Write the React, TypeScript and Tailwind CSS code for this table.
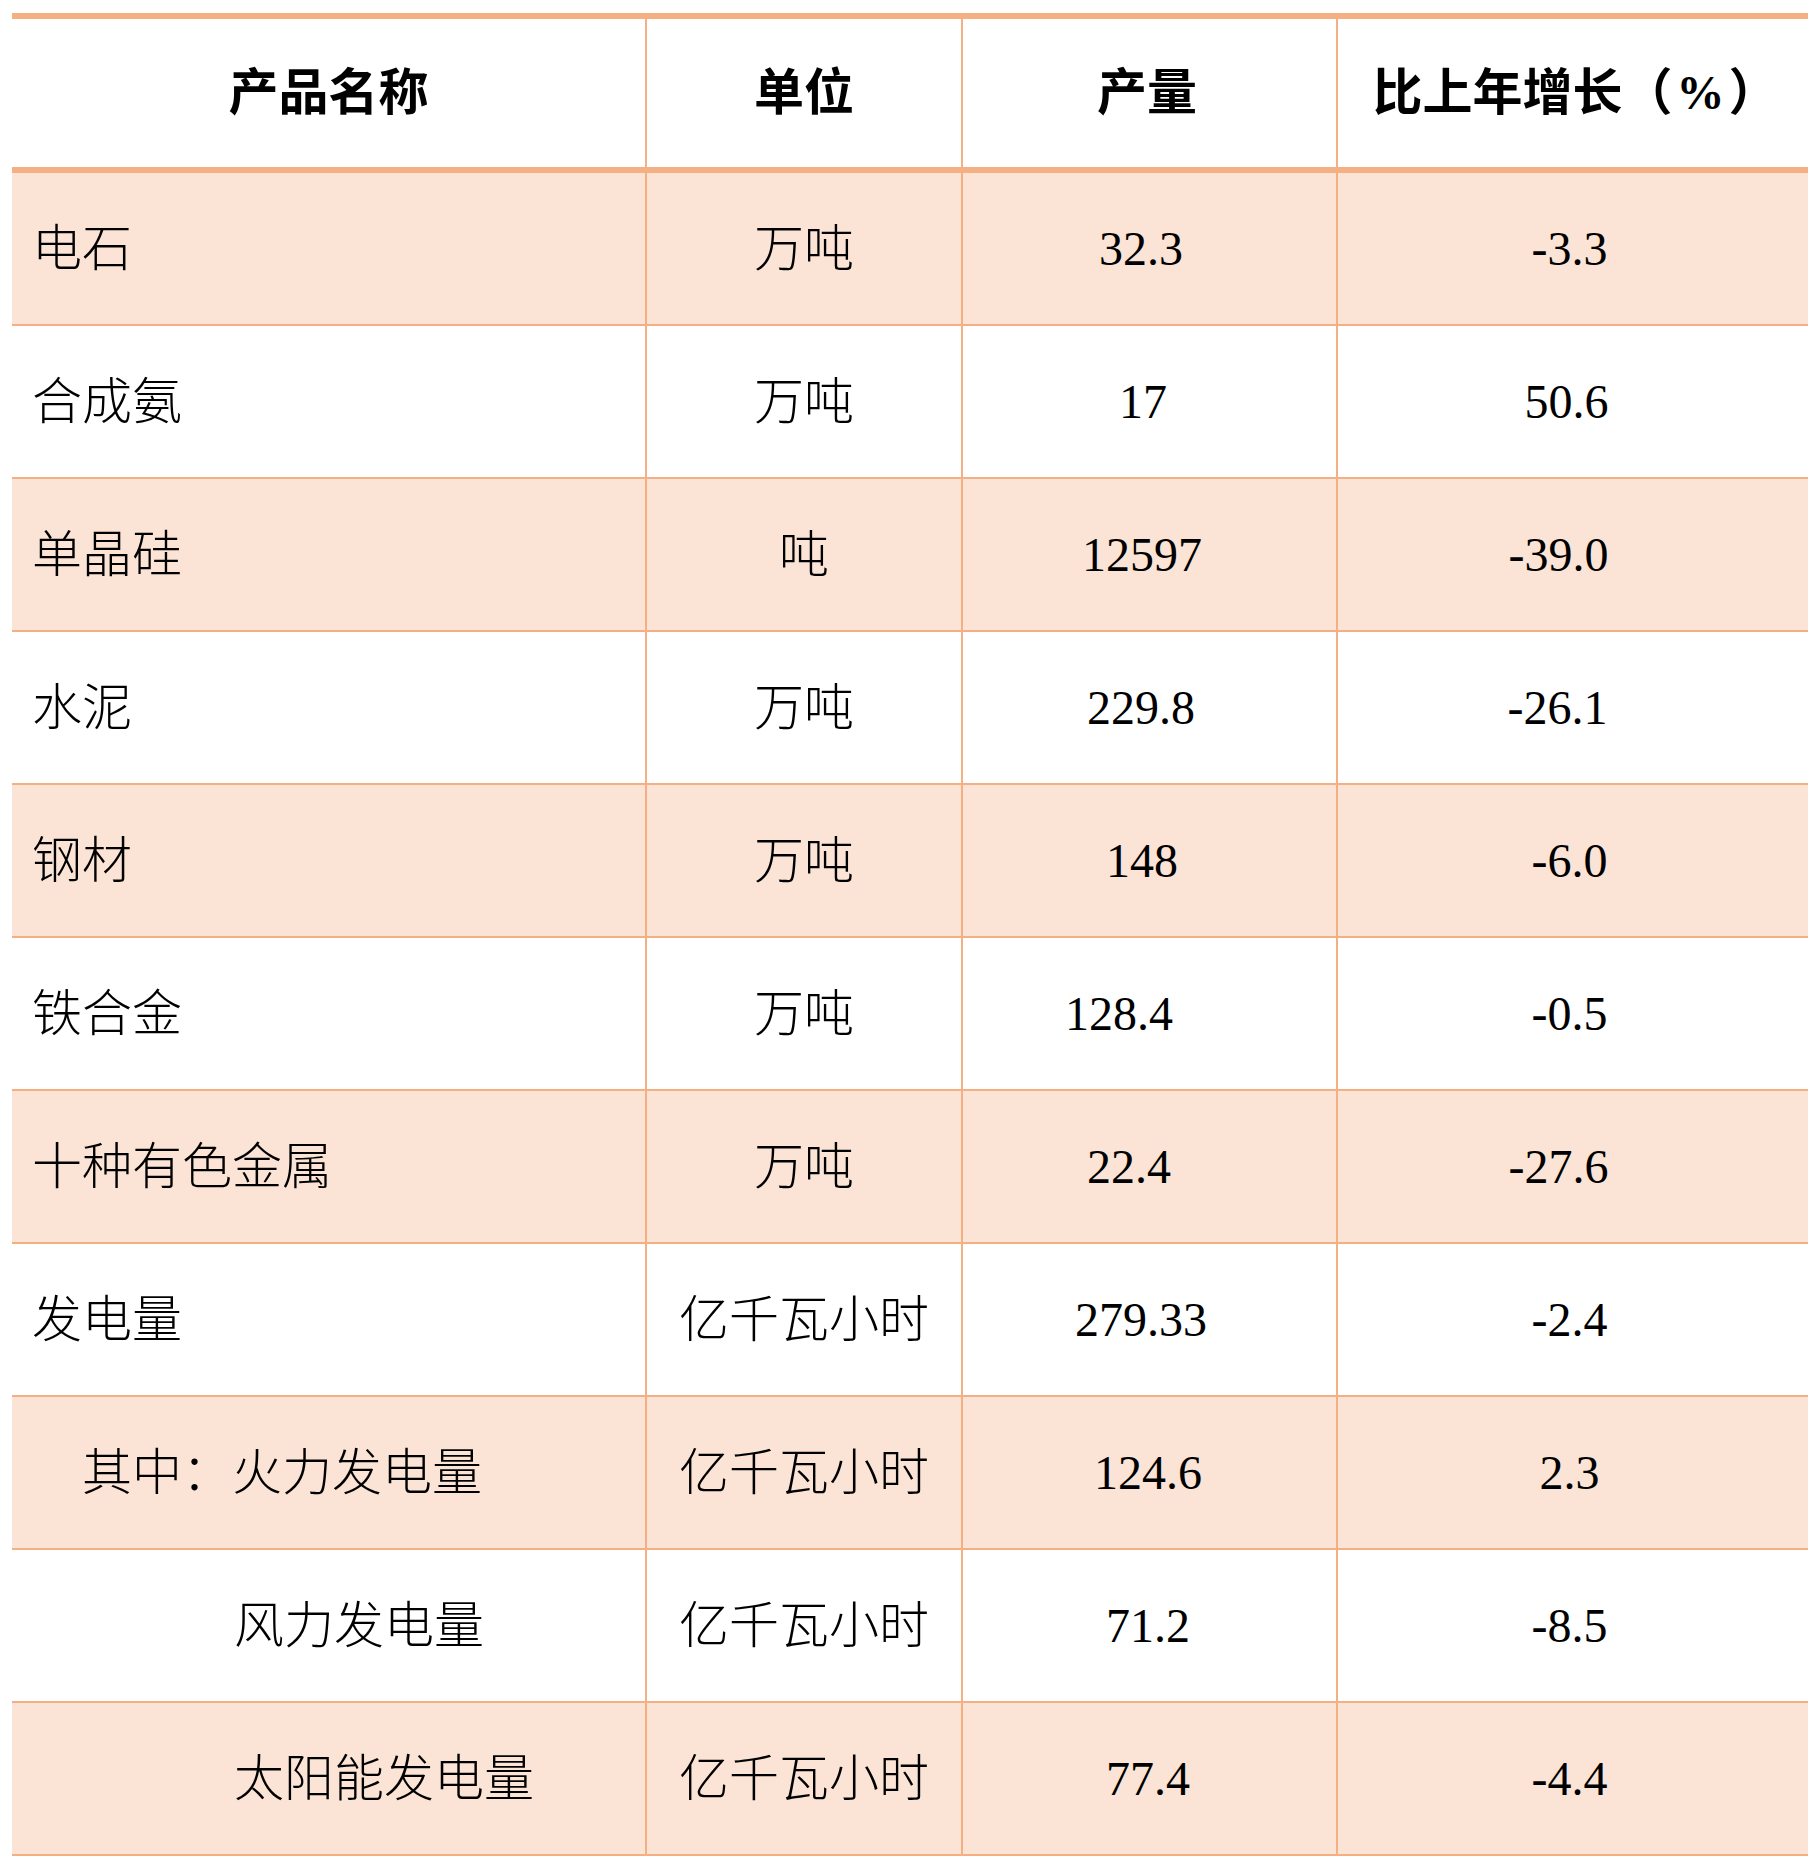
import React from 'react';

type Row = {
  name: string;
  indent: string;
  unit: string;
  qty: string;
  qtyShift: string;
  growth: string;
  growthShift: string;
};

const rows: Row[] = [
  { name: '电石', indent: 'pl-[20px]', unit: '万吨', qty: '32.3', qtyShift: 'pr-[17px]', growth: '-3.3', growthShift: 'pr-[7px]' },
  { name: '合成氨', indent: 'pl-[20px]', unit: '万吨', qty: '17', qtyShift: 'pr-[13px]', growth: '50.6', growthShift: 'pr-[13px]' },
  { name: '单晶硅', indent: 'pl-[20px]', unit: '吨', qty: '12597', qtyShift: 'pr-[15px]', growth: '-39.0', growthShift: 'pr-[29px]' },
  { name: '水泥', indent: 'pl-[20px]', unit: '万吨', qty: '229.8', qtyShift: 'pr-[17px]', growth: '-26.1', growthShift: 'pr-[31px]' },
  { name: '钢材', indent: 'pl-[20px]', unit: '万吨', qty: '148', qtyShift: 'pr-[15px]', growth: '-6.0', growthShift: 'pr-[7px]' },
  { name: '铁合金', indent: 'pl-[20px]', unit: '万吨', qty: '128.4', qtyShift: 'pr-[61px]', growth: '-0.5', growthShift: 'pr-[7px]' },
  { name: '十种有色金属', indent: 'pl-[20px]', unit: '万吨', qty: '22.4', qtyShift: 'pr-[41px]', growth: '-27.6', growthShift: 'pr-[29px]' },
  { name: '发电量', indent: 'pl-[20px]', unit: '亿千瓦小时', qty: '279.33', qtyShift: 'pr-[17px]', growth: '-2.4', growthShift: 'pr-[7px]' },
  { name: '其中：火力发电量', indent: 'pl-[70px]', unit: '亿千瓦小时', qty: '124.6', qtyShift: 'pr-[3px]', growth: '2.3', growthShift: 'pr-[7px]' },
  { name: '风力发电量', indent: 'pl-[222px]', unit: '亿千瓦小时', qty: '71.2', qtyShift: 'pr-[3px]', growth: '-8.5', growthShift: 'pr-[7px]' },
  { name: '太阳能发电量', indent: 'pl-[222px]', unit: '亿千瓦小时', qty: '77.4', qtyShift: 'pr-[3px]', growth: '-4.4', growthShift: 'pr-[7px]' },
];

const font = "font-['Liberation_Serif','Noto_Sans_CJK_SC',serif]";
const line = 'border-[#f4b083]';

export default function App() {
  return (
    <div className={`min-h-screen bg-white pt-[13px] pl-[12px] text-black ${font}`}>
      <div className={`w-[1796px] border-t-[6px] ${line}`}>
        {/* header */}
        <div className={`grid grid-cols-[635px_316px_375px_470px] h-[154px] border-b-[6px] ${line} font-bold`}>
          <div className={`flex items-center justify-center border-r-2 ${line} text-[50px] leading-none`}>产品名称</div>
          <div className={`flex items-center justify-center border-r-2 ${line} text-[50px] leading-none`}>单位</div>
          <div className={`flex items-center justify-center border-r-2 ${line} text-[50px] leading-none pr-[5px]`}>产量</div>
          <div className="flex items-center justify-center text-[50px] leading-none pl-[5px]">
            比上年增长（<span className="text-[48px] mx-[4px]">%</span>）
          </div>
        </div>

        {/* body */}
        {rows.map((r, i) => (
          <div
            key={r.name}
            className={`grid grid-cols-[635px_316px_375px_470px] h-[153px] border-b-2 ${line} ${i % 2 === 0 ? 'bg-[#fbe4d5]' : 'bg-white'}`}
          >
            <div className={`flex items-center border-r-2 ${line} text-[50px] leading-none font-light ${r.indent}`}>{r.name}</div>
            <div className={`flex items-center justify-center border-r-2 ${line} text-[50px] leading-none font-light`}>{r.unit}</div>
            <div className={`flex items-center justify-center border-r-2 ${line} text-[48px] leading-none ${r.qtyShift}`}>{r.qty}</div>
            <div className={`flex items-center justify-center text-[48px] leading-none ${r.growthShift}`}>{r.growth}</div>
          </div>
        ))}
      </div>
    </div>
  );
}
